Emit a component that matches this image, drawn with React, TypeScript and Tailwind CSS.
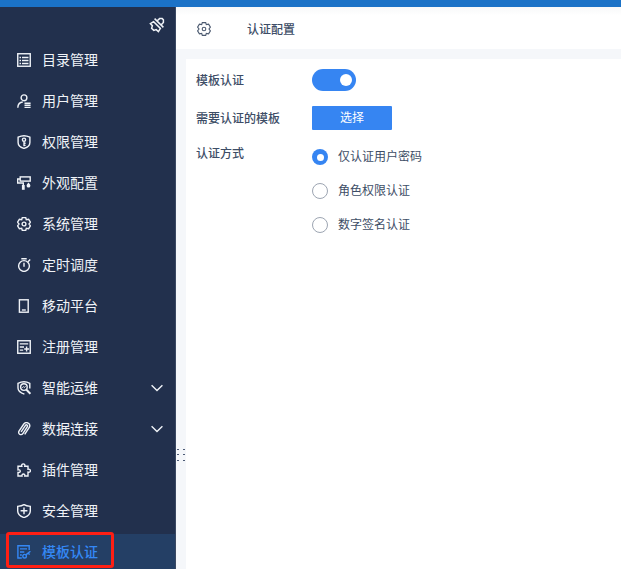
import { useState } from "react"
import type { ReactNode } from "react"

type MenuItem = {
    label: string,
    icon: ReactNode,
    expandable?: boolean
}

const gearPath = "M5.3 0.6H8.7L9.3 2.6L11.6 2.2L13.4 5.1L12 7L13.4 8.9L11.6 11.8L9.3 11.4L8.7 13.4H5.3L4.7 11.4L2.4 11.8L0.6 8.9L2 7L0.6 5.1L2.4 2.2L4.7 2.6Z"

const menu: MenuItem[] = [
    {
        label: "目录管理",
        icon: <>
            <rect x="0.75" y="0.75" width="12.5" height="12.5" />
            <path d="M2.5 4.5H4M2.5 7.5H4M2.5 10.5H4M5 4.5H11.5M5 7.5H11.5M5 10.5H11.5" />
        </>,
    },
    {
        label: "用户管理",
        icon: <>
            <circle cx="7" cy="3.8" r="2.9" />
            <path d="M0.8 13.7C0.9 10.3 2.7 8.2 5.8 8" />
            <path d="M7.5 9.2H13.6M7.5 11.3H13.6M7.5 13.4H13.6" />
        </>,
    },
    {
        label: "权限管理",
        icon: <>
            <path d="M7 0.7C9 0.7 11 1.3 12.9 2.2V7.5C12.9 10.4 10 12.6 7 13.4C4 12.6 1.1 10.4 1.1 7.5V2.2C3 1.3 5 0.7 7 0.7Z" />
            <circle cx="7" cy="4.7" r="1.6" />
            <path d="M7 6.4V11.2M7 8.2H8.6M7 10.4H8.6" />
        </>,
    },
    {
        label: "外观配置",
        icon: <>
            <rect x="3.2" y="0.9" width="10" height="4.2" />
            <path d="M3.2 3H0.7V7H6.3V9" />
            <path d="M6.3 9V13.8" strokeWidth="2.8" />
            <path d="M11.5 6.5C12.7 8 13.4 8.8 13.4 9.7A1.9 1.9 0 0 1 9.6 9.7C9.6 8.8 10.3 8 11.5 6.5Z" fill="currentColor" stroke="none" />
        </>,
    },
    {
        label: "系统管理",
        icon: <>
            <path d={gearPath} />
            <circle cx="7" cy="7" r="1.9" />
        </>,
    },
    {
        label: "定时调度",
        icon: <>
            <circle cx="7" cy="8" r="5.4" />
            <path d="M4.3 0.8H9.7M7 4.8V8.8M11 3.8L13.2 1.6" />
        </>,
    },
    {
        label: "移动平台",
        icon: <>
            <rect x="2.4" y="0.8" width="8.8" height="12.4" />
            <path d="M4.9 11H8.8" />
        </>,
    },
    {
        label: "注册管理",
        icon: <>
            <rect x="0.75" y="0.75" width="12.5" height="12.5" />
            <path d="M2.8 3.9H11.2M2.8 7H7M2.8 10.1H6.2M7.2 9H12M9.6 6.6V11.4" />
        </>,
    },
    {
        label: "智能运维",
        expandable: true,
        icon: <>
            <path d="M7.4 13.2C4 12 1 9.8 1 7V2.3C4.8 0.4 9.2 0.4 12.8 2.3V7.5" />
            <circle cx="6.9" cy="6.1" r="3.3" />
            <path d="M9.2 8.5L13.4 12.8" strokeWidth="2" />
            <path d="M5.3 6.8L6.5 5.6L7.4 6.5L8.5 5.3" strokeWidth="1" />
        </>,
    },
    {
        label: "数据连接",
        expandable: true,
        icon: <path d="M4.1 9.8L8.3 3.6C9.4 2 11.2 3.2 10.2 4.8L6 11.3C4.4 13.8 0.5 12.3 2 9.1L6.8 2C9.3 -0.9 14.1 1.3 12.4 5.2L7.7 12.3" />,
    },
    {
        label: "插件管理",
        icon: <path d="M1 3.3H4.8C3.8 0.1 8.7 0.1 7.8 3.3H11V6.2C14.2 5.4 14.2 10 11 9.2V13H7.8C8.4 10.3 4.5 10.3 5 13H1V9.5C4 10.1 4 6.2 1 6.8Z" />,
    },
    {
        label: "安全管理",
        icon: <>
            <path d="M7 0.7C8.9 2 10.9 2.3 13.3 2.4V7C13.3 10.3 10.5 12.4 7 13.6C3.5 12.4 0.7 10.3 0.7 7V2.4C3.1 2.3 5.1 2 7 0.7Z" />
            <path d="M3.6 6.8H10.4M7 3.4V10.2" />
        </>,
    },
    {
        label: "模板认证",
        icon: <>
            <path d="M12.2 5V0.8H0.9V13H4.8M3 3.9H10M3 7H7.3M3 10H4.8" />
            <circle cx="7.6" cy="11.2" r="1.8" />
            <path d="M8.9 9.9L13.4 6.3M11.2 8L12.6 9.6" />
        </>,
    },
]

const methods = ["仅认证用户密码", "角色权限认证", "数字签名认证"]

function Icon({ children }: { children: ReactNode }) {
    return (
        <svg viewBox="0 0 14 14" className="size-3.5 shrink-0" fill="none" stroke="currentColor" strokeWidth="1.4">
            {children}
        </svg>
    )
}

function Sidebar() {
    const [active, setActive] = useState("模板认证")

    return (
        <aside className="w-44 shrink-0 bg-[#22304d] border-r border-[#3b4963] text-[#f0f3f8]">
            <div className="h-[35px] flex justify-end pt-2.5 pr-2.5">
                <svg viewBox="0 0 16 16" className="size-4" fill="none" stroke="currentColor" strokeWidth="1.5">
                    <path d="M4.6 4.6L1.4 6.6L3.4 8.8L2.6 11.2L4.8 13.4L7.2 12.6L9.4 14.6L11.4 11.4Z" />
                    <path d="M5.6 1.6L14.4 10.4" />
                    <path d="M8 4L10.6 1.6H13.2L14.4 2.8V5.4L12 8" />
                </svg>
            </div>
            <ul className="flex flex-col gap-[5px]">
                {menu.map((item) => (
                    <li
                        key={item.label}
                        onClick={() => setActive(item.label)}
                        className={`h-9 flex items-center pl-[17px] pr-3 cursor-pointer ${active === item.label ? "bg-[#243f65] text-[#3488f5] font-medium" : ""}`}
                    >
                        <Icon>{item.icon}</Icon>
                        <span className="ml-[11px] flex-1 text-sm leading-5 pb-0.5">{item.label}</span>
                        {item.expandable && (
                            <svg viewBox="0 0 12 8" className="w-3 h-2" fill="none" stroke="currentColor" strokeWidth="1.4">
                                <path d="M0.6 1.2L6 6.6L11.4 1.2" />
                            </svg>
                        )}
                    </li>
                ))}
            </ul>
            <div className="absolute left-[6px] top-[532px] w-[108px] h-9 max-h-9 border-3 border-[#ff1f14] rounded-[3px] pointer-events-none"></div>
        </aside>
    )
}

export default function App() {
    const [enabled, setEnabled] = useState(true)
    const [method, setMethod] = useState(0)

    return (
        <div className="relative h-screen flex flex-col overflow-hidden bg-[#f5f7fa] text-[#3d4d66] font-['Noto_Sans_CJK_SC',sans-serif]">
            <div className="h-[7px] shrink-0 bg-[#1b72c7]"></div>
            <div className="flex flex-1 min-h-0">
                <Sidebar />
                <main className="flex-1 flex flex-col min-w-0">
                    <header className="h-[42px] shrink-0 flex items-center pl-[21px] pt-0.5 bg-linear-to-b from-[#f7f8f9] to-white to-20%">
                        <svg viewBox="0 0 14 14" className="size-3.5" fill="none" stroke="#4c5a70" strokeWidth="1.1">
                            <path d={gearPath} />
                            <circle cx="7" cy="7" r="1.8" />
                        </svg>
                        <h1 className="ml-9 text-xs font-medium">认证配置</h1>
                    </header>
                    <div className="flex flex-1 min-h-0">
                        <div className="w-2.5 shrink-0 pt-[400px]">
                            <svg viewBox="0 0 10 14" className="w-2.5 h-3.5" fill="#4c5a75">
                                <path d="M1 0h2v1h-2zM7 0h2v1h-2zM1 5h2v1h-2zM7 5h2v1h-2zM1 11h2v1h-2zM7 11h2v1h-2z" />
                            </svg>
                        </div>
                        <section className="flex-1 mt-2.5 pl-2.5 pt-2.5 bg-white text-xs">
                            <div className="flex items-center h-[22px]">
                                <span className="w-[116px] font-medium">模板认证</span>
                                <button
                                    onClick={() => setEnabled(!enabled)}
                                    className={`w-11 h-[22px] rounded-full flex items-center px-1 ${enabled ? "bg-[#3685f2] justify-end" : "bg-gray-300"}`}
                                >
                                    <span className="size-3 rounded-full bg-white"></span>
                                </button>
                            </div>
                            <div className="flex items-center h-6 mt-[15px]">
                                <span className="w-[116px] font-medium">需要认证的模板</span>
                                <button className="w-20 h-6 pb-0.5 rounded-[1px] bg-[#3685f2] text-white">选择</button>
                            </div>
                            <div className="flex mt-[15px]">
                                <span className="w-[116px] font-medium">认证方式</span>
                                <div className="flex flex-col gap-[18px] pt-1">
                                    {methods.map((name, i) => (
                                        <div key={name} onClick={() => setMethod(i)} className="flex items-center h-4 cursor-pointer">
                                            <span className={`size-4 rounded-full flex items-center justify-center ${method === i ? "bg-[#3685f2]" : "border border-[#9da5b2]"}`}>
                                                {method === i && <span className="size-[7px] rounded-full bg-white"></span>}
                                            </span>
                                            <span className="ml-2.5 pb-0.5">{name}</span>
                                        </div>
                                    ))}
                                </div>
                            </div>
                        </section>
                    </div>
                </main>
            </div>
        </div>
    )
}
